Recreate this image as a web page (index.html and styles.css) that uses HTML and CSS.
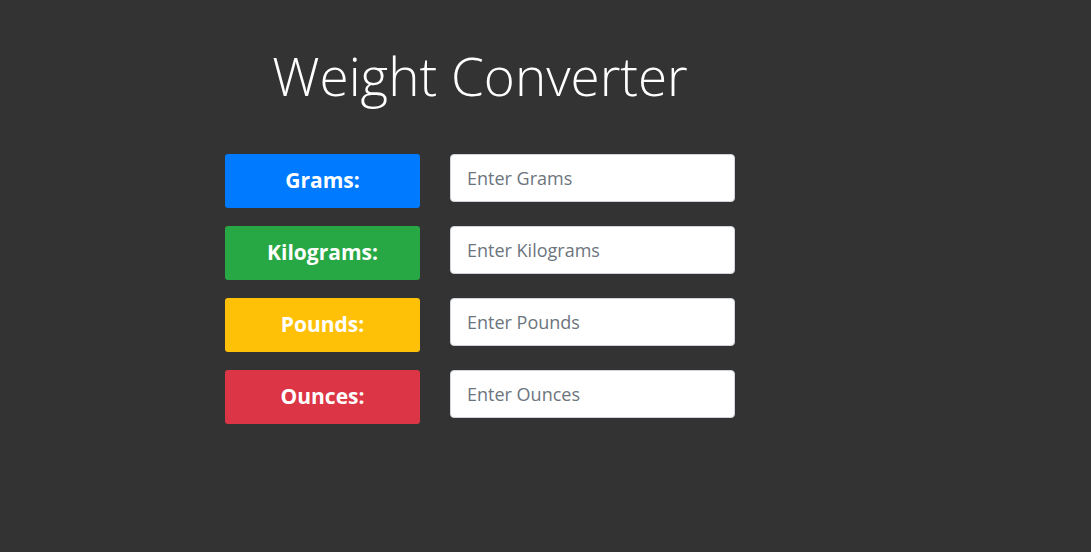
FILE: index.html
```html
<!DOCTYPE html>
<html lang="en">
<head>
<meta charset="utf-8">
<title>Weight Converter</title>
<link rel="stylesheet" href="styles.css">
</head>
<body>
<main class="app">
  <h1 class="title">Weight Converter</h1>
  <form class="rows">
    <div class="row">
      <label class="tag tag-blue" for="grams">Grams:</label>
      <input class="field" id="grams" type="number" placeholder="Enter Grams">
    </div>
    <div class="row">
      <label class="tag tag-green" for="kg">Kilograms:</label>
      <input class="field" id="kg" type="number" placeholder="Enter Kilograms">
    </div>
    <div class="row">
      <label class="tag tag-yellow" for="lb">Pounds:</label>
      <input class="field" id="lb" type="number" placeholder="Enter Pounds">
    </div>
    <div class="row">
      <label class="tag tag-red" for="oz">Ounces:</label>
      <input class="field" id="oz" type="number" placeholder="Enter Ounces">
    </div>
  </form>
</main>
</body>
</html>
```

FILE: styles.css
```css
html, body {
  margin: 0;
  padding: 0;
  background: #333333;
  height: 100%;
}
body {
  font-family: "Open Sans", "Noto Sans", sans-serif;
  color: #fff;
}
.app {
  width: 510px;
  margin-left: 225px;
  padding-top: 44px;
}
.title {
  margin: 0 0 46px 0;
  text-align: center;
  font-weight: 300;
  font-size: 53px;
  line-height: 1.2;
  color: #fff;
}
.rows {
  display: flex;
  flex-direction: column;
  gap: 18px;
}
.row {
  display: grid;
  grid-template-columns: 195px 285px;
  column-gap: 30px;
  align-items: start;
}
.tag {
  height: 54px;
  box-sizing: border-box;
  display: flex;
  align-items: center;
  justify-content: center;
  border-radius: 3px;
  font-weight: 700;
  font-size: 21px;
  color: #fff;
  padding-bottom: 2px;
}
.tag-blue { background: #007bff; }
.tag-green { background: #28a745; }
.tag-yellow { background: #ffc107; }
.tag-red { background: #dc3545; }
.field {
  height: 48px;
  box-sizing: border-box;
  border: 1px solid #ced4da;
  border-radius: 4px;
  background: #fff;
  padding: 0 16px;
  font-family: "Open Sans", "Noto Sans", sans-serif;
  font-size: 18px;
  color: #495057;
  outline: none;
  -moz-appearance: textfield;
}
.field::placeholder {
  color: #6c757d;
  opacity: 1;
}
.field::-webkit-outer-spin-button,
.field::-webkit-inner-spin-button {
  -webkit-appearance: none;
  margin: 0;
}
```
